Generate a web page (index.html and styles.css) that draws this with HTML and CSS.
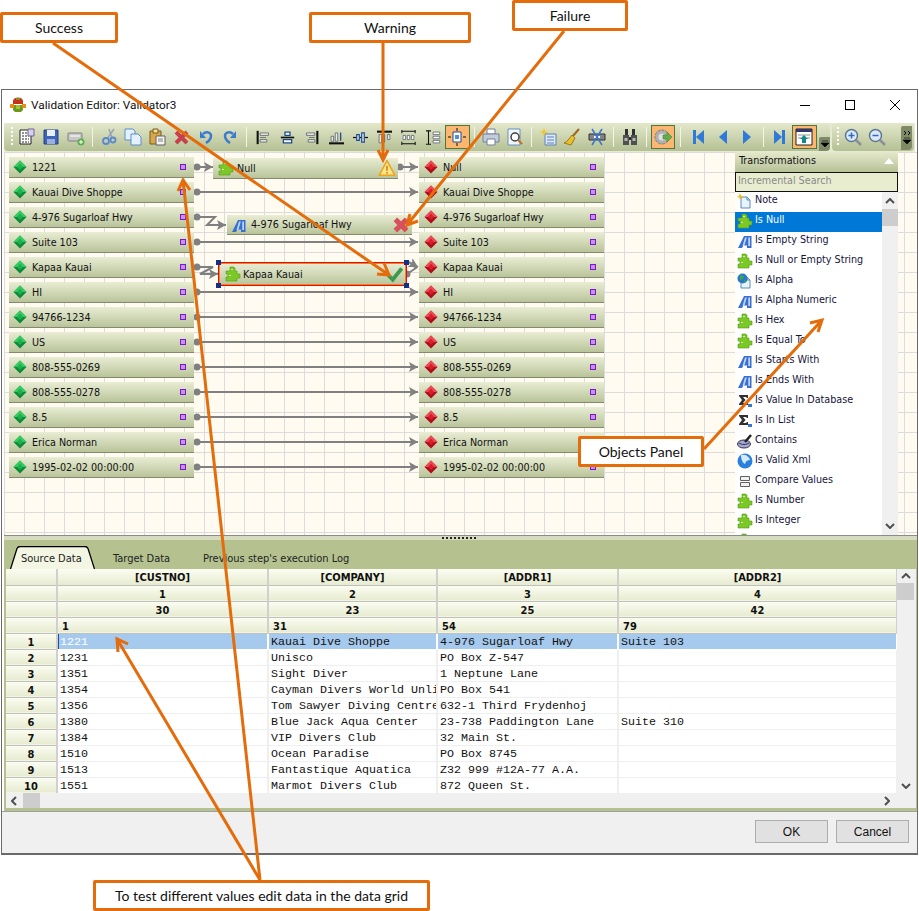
FILE: index.html
```html
<!DOCTYPE html>
<html lang="en">
<head>
    <meta charset="UTF-8">
    <title>Validation Editor: Validator3</title>
    <link rel="stylesheet" href="styles.css">
</head>
<body>
    <svg class="defs" width="0" height="0">
        <defs>
            <symbol id="i-green" viewBox="0 0 16 16">
                <polygon points="8,1.500 14.500,8 8,14.500 1.500,8" fill="#0c8a36"/>
                <polygon points="8,1.500 14.500,8 8,8 1.500,8" fill="#35cc62"/>
                <polygon points="8,4.500 11,8 8,11 5,8" fill="#1cb04e"/>
            </symbol>
            <symbol id="i-red" viewBox="0 0 16 16">
                <polygon points="8,1.500 14.500,8 8,14.500 1.500,8" fill="#ae0e1a"/>
                <polygon points="8,1.500 14.500,8 8,8 1.500,8" fill="#ee4a56"/>
                <polygon points="8,4.500 11,8 8,11 5,8" fill="#d81f2d"/>
            </symbol>
            <symbol id="i-puzzle" viewBox="0 0 16 16">
                <path d="M5 1h4v1h1v3h2v3h3v4h-3v3H1v-4h2V8H1V5h4V2z" fill="#7cc826" stroke="#4f9a16" stroke-width=".6"/>
                <path d="M6 3h2v1H6zM4 9h2v1H4z" fill="#d8f2a8"/>
            </symbol>
            <symbol id="i-a" viewBox="0 0 16 16">
                <path d="M1 15 7 3h7.500v12H10v-2.500H6.500L5 15z" fill="#3a6fd0"/>
                <path d="M8 4.500 5.500 13h1.800l2.500-8.500zM11.300 4.500h1.700V13h-1.700z" fill="#bcd6fa"/>
            </symbol>
            <symbol id="i-doc" viewBox="0 0 16 16">
                <path d="M4 4h6l3 3v8H4z" fill="#e8f3fc" stroke="#5a8cb8"/>
                <path d="M10 4v3h3" fill="none" stroke="#5a8cb8"/>
            </symbol>
            <symbol id="i-sigma" viewBox="0 0 16 16">
                <path d="M2 2h9v3H9.500V4H6l2.500 3L6 10h3.500V9H11v3H2v-1l3-4-3-4z" fill="#303030"/>
                <path d="M11 11h4v3h-4z" fill="#3a78d0"/>
            </symbol>
        </defs>
    </svg>

    <div class="window">
        <div class="titlebar">
            <svg class="app-icon" viewBox="0 0 16 16" width="16" height="16">
                <path d="M3 8h10v5l-2 2H5l-2-2z" fill="#6d9a1c"/>
                <path d="M0 7h4v4H0zM12 7h4v4h-4z" fill="#e0901a"/>
                <path d="M3 4a5 3.500 0 0 1 10 0v3H3z" fill="#c8301c"/>
                <path d="M6 1h4v2H6z" fill="#7a9a20"/>
                <path d="M6 8h4v4H6z" fill="#a8c030"/>
            </svg>
            <span class="title">Validation Editor: Validator3</span>
            <div class="win-btns">
                <svg viewBox="0 0 10 10" width="10" height="10"><path d="M0 5.500h10" stroke="#000"/></svg>
                <svg viewBox="0 0 10 10" width="10" height="10"><rect x=".5" y=".5" width="9" height="9" fill="none" stroke="#000"/></svg>
                <svg viewBox="0 0 10 10" width="10" height="10"><path d="M0 0l10 10M10 0L0 10" stroke="#000"/></svg>
            </div>
        </div>

        <div class="toolstrip">
            <div class="toolbar main">
                <span class="grip"></span>
                <span class="tool"><svg viewBox="0 0 18 18"><path d="M2 2h11v14H2z" fill="#fff" stroke="#222"/><path d="M4 5h7M4 8h7M4 11h7M4 14h7" stroke="#222" stroke-dasharray="2 1"/><path d="M10 1h6v7h-6z" fill="#d8d0e8" stroke="#7060a0"/></svg></span>
                <span class="tool"><svg viewBox="0 0 18 18"><path d="M2 2h14v14H2z" fill="#3f63b8" stroke="#28407e"/><path d="M5 2h8v6H5z" fill="#e8eef8"/><path d="M5 11h8v5H5z" fill="#9ab0dc"/></svg></span>
                <span class="tool"><svg viewBox="0 0 18 18"><rect x="1" y="5" width="14" height="8" rx="1" fill="#c8c8c8" stroke="#808080"/><path d="M3 8h10" stroke="#fff"/><circle cx="14" cy="14" r="3.500" fill="#5ab04a"/><path d="M12 14h4M14 12v4" stroke="#fff"/></svg></span>
                <span class="sep"></span>
                <span class="tool"><svg viewBox="0 0 18 18"><path d="M14 1 7 11M9 1l3 9" stroke="#98a4b4" stroke-width="1.500" fill="none"/><circle cx="6" cy="13" r="3" fill="none" stroke="#5a88d0" stroke-width="1.800"/><circle cx="13" cy="12" r="2.500" fill="none" stroke="#5a88d0" stroke-width="1.800"/></svg></span>
                <span class="tool"><svg viewBox="0 0 18 18"><path d="M1 1h8l2 2v9H1z" fill="#e4f0fc" stroke="#5a90c8"/><path d="M7 6h7l3 3v8H7z" fill="#e4f0fc" stroke="#5a90c8"/></svg></span>
                <span class="tool"><svg viewBox="0 0 18 18"><path d="M2 3h11v13H2z" fill="#d8a848" stroke="#7a5a20"/><path d="M5 1h5v4H5z" fill="#f0e0a0" stroke="#7a5a20"/><path d="M8 8h9v9H8z" fill="#f4f4f4" stroke="#606060"/><path d="M10 11h5M10 13h5" stroke="#808080"/></svg></span>
                <span class="tool"><svg viewBox="0 0 18 18"><path d="M3 4l11 11M14 4 3 15" stroke="#c8404c" stroke-width="4"/></svg></span>
                <span class="tool"><svg viewBox="0 0 18 18"><path d="M6 6c3-3 8-2 8 2 0 3-2 5-5 7" fill="none" stroke="#3a7ad0" stroke-width="2.500"/><path d="M3 3v7h6z" fill="#3a7ad0"/></svg></span>
                <span class="tool"><svg viewBox="0 0 18 18"><path d="M12 6C9 3 4 4 4 8c0 3 2 5 5 7" fill="none" stroke="#3a7ad0" stroke-width="2.500"/><path d="M15 3v7H9z" fill="#3a7ad0"/></svg></span>
                <span class="sep"></span>
                <span class="tool sm"><svg viewBox="0 0 18 18"><path d="M2 1v16" stroke="#111" stroke-width="2.500"/><path d="M5 3.500h10v3H5zM5 11.500h8v3H5z" fill="#e8e8e8" stroke="#606870"/><path d="M5 9h7" stroke="#606870"/></svg></span>
                <span class="tool sm"><svg viewBox="0 0 18 18"><path d="M6 2.500h6v4H6zM4 11.500h10v4H4z" fill="#fff" stroke="#1a4a90" stroke-width="1.500"/><path d="M1 9h16" stroke="#111" stroke-width="2"/></svg></span>
                <span class="tool sm"><svg viewBox="0 0 18 18"><path d="M16 1v16" stroke="#111" stroke-width="2.500"/><path d="M3 3.500h10v3H3zM5 11.500h8v3H5z" fill="#e8e8e8" stroke="#606870"/><path d="M6 9h7" stroke="#606870"/></svg></span>
                <span class="tool sm"><svg viewBox="0 0 18 18"><path d="M0 16h18" stroke="#111" stroke-width="2.500"/><path d="M2.500 7.500h3v6h-3zM7.500 3.500h3v10h-3z" fill="#e8e8e8" stroke="#606870"/><path d="M14 3v10" stroke="#1a4a90" stroke-width="1.500"/></svg></span>
                <span class="tool sm"><svg viewBox="0 0 18 18"><path d="M0 9h18" stroke="#111" stroke-width="1.500"/><path d="M4.500 5.500h3v7h-3zM10.500 3.500h3v11h-3z" fill="#fff" stroke="#1a4a90" stroke-width="1.500"/></svg></span>
                <span class="tool sm"><svg viewBox="0 0 18 18"><path d="M0 2h18" stroke="#111" stroke-width="2.500"/><path d="M2.500 5.500h3v10h-3zM12.500 5.500h3v6h-3z" fill="#e8e8e8" stroke="#606870"/><path d="M9 5v10" stroke="#606870" stroke-width="1.500"/></svg></span>
                <span class="tool sm"><svg viewBox="0 0 18 18"><path d="M1 1.500h16M1 16.500h16M1 0v4M17 0v4M1 14v4M17 14v4" stroke="#111" stroke-width="1.300"/><path d="M2.500 6.500h3v5h-3zM7.500 6.500h3v5h-3zM12.500 6.500h3v5h-3z" fill="#fff" stroke="#606870"/></svg></span>
                <span class="tool sm"><svg viewBox="0 0 18 18"><path d="M3 1v16M0 1h6M0 17h6" stroke="#111" stroke-width="1.300"/><path d="M8.500 2.500h8v3h-8zM8.500 7.500h8v3h-8zM8.500 12.500h8v3h-8z" fill="#fff" stroke="#606870"/></svg></span>
                <span class="tool on"><svg viewBox="0 0 18 18"><path d="M5 4h8v10H5z" fill="#fff" stroke="#1a4a90"/><path d="M9 0v3M9 15v3M0 9h3M15 9h3" stroke="#111"/><path d="M7 7h4v4H7z" fill="#4a90e0"/></svg></span>
                <span class="sep"></span>
                <span class="tool"><svg viewBox="0 0 18 18"><path d="M5 1h8v5H5z" fill="#fff" stroke="#7080a0"/><path d="M1 6h16v8H1z" fill="#c4ccd8" stroke="#7080a0"/><path d="M5 11h8v6H5z" fill="#fff" stroke="#7080a0"/></svg></span>
                <span class="tool"><svg viewBox="0 0 18 18"><path d="M2 1h12v16H2z" fill="#f0f6fc" stroke="#6a90c0"/><circle cx="9" cy="9" r="4" fill="#fff" stroke="#404040" stroke-width="1.500"/><path d="M12 12l4 4" stroke="#c07020" stroke-width="2"/></svg></span>
                <span class="sep"></span>
                <span class="tool"><svg viewBox="0 0 18 18"><path d="M6 6h11v11H6z" fill="#dce8f8" stroke="#5a80b8"/><path d="M8 9h7M8 12h7M8 15h7" stroke="#5a80b8"/><path d="M5 0l1 3 3 1-3 1-1 4-1-4-4-1 4-1z" fill="#f0c820"/></svg></span>
                <span class="tool"><svg viewBox="0 0 18 18"><path d="M16 1 9 9" stroke="#a06a20" stroke-width="2"/><path d="M9 7l3 3-4 7-7-2c3-1 5-4 8-8z" fill="#e8c030" stroke="#a07a10"/></svg></span>
                <span class="tool"><svg viewBox="0 0 18 18"><path d="M1 6h16v6H1z" fill="#808488" stroke="#303030"/><path d="M6 8h6v2H6z" fill="#fff"/><path d="M4 1l10 16M14 1 4 17" stroke="#3a78d0" stroke-width="1.500"/></svg></span>
                <span class="sep"></span>
                <span class="tool"><svg viewBox="0 0 18 18"><path d="M2 7h6v10H2zM10 7h6v10h-6z" fill="#505050"/><path d="M4 1h3v6H4zM11 1h3v6h-3zM8 9h2v3H8z" fill="#303030"/><path d="M3.500 10h3v3h-3zM11.500 10h3v3h-3z" fill="#b8b8b8"/></svg></span>
                <span class="sep"></span>
                <span class="tool on"><svg viewBox="0 0 18 18"><circle cx="8" cy="9" r="7" fill="#b0b0b0" stroke="#808080" stroke-dasharray="3 1"/><circle cx="8" cy="9" r="3.500" fill="#e0e0e0"/><path d="M9 7h4V4l5 5-5 5v-3H9z" fill="#5fb04a" stroke="#3a7a2a" stroke-width=".5"/></svg></span>
                <span class="sep wide"></span>
                <span class="tool"><svg viewBox="0 0 18 18"><path d="M4 2h3v14H4z" fill="#2f7ad8"/><path d="M15 2v14L7 9z" fill="#2f7ad8"/></svg></span>
                <span class="tool"><svg viewBox="0 0 18 18"><path d="M13 2v14L5 9z" fill="#2f7ad8"/></svg></span>
                <span class="tool"><svg viewBox="0 0 18 18"><path d="M5 2v14l8-7z" fill="#2f7ad8"/></svg></span>
                <span class="sep"></span>
                <span class="tool"><svg viewBox="0 0 18 18"><path d="M3 2v14l8-7z" fill="#2f7ad8"/><path d="M11 2h3v14h-3z" fill="#2f7ad8"/></svg></span>
                <span class="tool on"><svg viewBox="0 0 18 18"><path d="M1 1h16v16H1z" fill="#fff" stroke="#222"/><path d="M1 1h16v3H1z" fill="#2a3a70"/><path d="M3 7h12M3 10h3M12 10h3" stroke="#909090"/><path d="M9 7l4 4h-2v4H7v-4H5z" fill="#108a8a"/></svg></span>
                <span class="overflow"><svg viewBox="0 0 8 8" width="8" height="8"><path d="M1 1h6M0 3h8l-4 4z" fill="#000" stroke="#000" stroke-width=".6"/></svg></span>
            </div>
            <div class="toolbar zoom">
                <span class="grip"></span>
                <span class="tool"><svg viewBox="0 0 18 18"><circle cx="7.500" cy="7.500" r="6" fill="#dce8f4" stroke="#5a7898" stroke-width="1.500"/><path d="M4.500 7.500h6M7.500 4.500v6" stroke="#2f6ac8" stroke-width="1.500"/><path d="M12 12l5 5" stroke="#8a9098" stroke-width="2.500"/></svg></span>
                <span class="tool"><svg viewBox="0 0 18 18"><circle cx="7.500" cy="7.500" r="6" fill="#dce8f4" stroke="#5a7898" stroke-width="1.500"/><path d="M4.500 7.500h6" stroke="#2f6ac8" stroke-width="1.500"/><path d="M12 12l5 5" stroke="#8a9098" stroke-width="2.500"/></svg></span>
                <span class="overflow tall"><svg viewBox="0 0 8 18" width="8" height="18"><path d="M1 2l2 2-2 2M5 2l2 2-2 2" fill="none" stroke="#000"/><path d="M1 9h6M0 11h8l-4 4z" fill="#000" stroke="#000" stroke-width=".6"/></svg></span>
            </div>
        </div>

        <div class="canvas">
            <svg class="wires" width="911" height="383" viewBox="4 152 911 383">
                <defs>
                    <marker id="dot" markerUnits="userSpaceOnUse" markerWidth="8" markerHeight="8" refX="4" refY="4"><circle cx="4" cy="4" r="3.500" fill="#808080"/></marker>
                    <marker id="head" markerUnits="userSpaceOnUse" markerWidth="10" markerHeight="10" refX="9" refY="5" orient="auto"><path d="M0 0l9 5-9 5 2-5z" fill="#808080"/></marker>
                </defs>
                <path class="wire" d="M197 167H213"/>
                <path class="wire" d="M400 167H418"/>
                <path class="wire" d="M197 192H418"/>
                <path class="wire" d="M197 217H215L207 225H226"/>
                <path class="wire" d="M197 242H418"/>
                <path class="wire" d="M197 267H213L200 274H218"/>
                <path class="wire" d="M197 292H418"/>
                <path class="wire" d="M197 317H418"/>
                <path class="wire" d="M197 342H418"/>
                <path class="wire" d="M197 367H418"/>
                <path class="wire" d="M197 392H418"/>
                <path class="wire" d="M197 417H418"/>
                <path class="wire" d="M197 442H418"/>
                <path class="wire" d="M197 467H418"/>
                <path class="wire" d="M407 274L416 268L409 262L418 267"/>
            </svg>

            <div class="nodes">
                <div class="node"><svg class="ico"><use href="#i-green"/></svg><span class="label">1221</span><i class="port"></i></div>
                <div class="node"><svg class="ico"><use href="#i-green"/></svg><span class="label">Kauai Dive Shoppe</span><i class="port"></i></div>
                <div class="node"><svg class="ico"><use href="#i-green"/></svg><span class="label">4-976 Sugarloaf Hwy</span><i class="port"></i></div>
                <div class="node"><svg class="ico"><use href="#i-green"/></svg><span class="label">Suite 103</span><i class="port"></i></div>
                <div class="node"><svg class="ico"><use href="#i-green"/></svg><span class="label">Kapaa Kauai</span><i class="port"></i></div>
                <div class="node"><svg class="ico"><use href="#i-green"/></svg><span class="label">HI</span><i class="port"></i></div>
                <div class="node"><svg class="ico"><use href="#i-green"/></svg><span class="label">94766-1234</span><i class="port"></i></div>
                <div class="node"><svg class="ico"><use href="#i-green"/></svg><span class="label">US</span><i class="port"></i></div>
                <div class="node"><svg class="ico"><use href="#i-green"/></svg><span class="label">808-555-0269</span><i class="port"></i></div>
                <div class="node"><svg class="ico"><use href="#i-green"/></svg><span class="label">808-555-0278</span><i class="port"></i></div>
                <div class="node"><svg class="ico"><use href="#i-green"/></svg><span class="label">8.5</span><i class="port"></i></div>
                <div class="node"><svg class="ico"><use href="#i-green"/></svg><span class="label">Erica Norman</span><i class="port"></i></div>
                <div class="node"><svg class="ico"><use href="#i-green"/></svg><span class="label">1995-02-02 00:00:00</span><i class="port"></i></div>
            </div>

            <div class="nodes target">
                <div class="node"><svg class="ico"><use href="#i-red"/></svg><span class="label">Null</span><i class="port"></i></div>
                <div class="node"><svg class="ico"><use href="#i-red"/></svg><span class="label">Kauai Dive Shoppe</span><i class="port"></i></div>
                <div class="node"><svg class="ico"><use href="#i-red"/></svg><span class="label">4-976 Sugarloaf Hwy</span><i class="port"></i></div>
                <div class="node"><svg class="ico"><use href="#i-red"/></svg><span class="label">Suite 103</span><i class="port"></i></div>
                <div class="node"><svg class="ico"><use href="#i-red"/></svg><span class="label">Kapaa Kauai</span><i class="port"></i></div>
                <div class="node"><svg class="ico"><use href="#i-red"/></svg><span class="label">HI</span><i class="port"></i></div>
                <div class="node"><svg class="ico"><use href="#i-red"/></svg><span class="label">94766-1234</span><i class="port"></i></div>
                <div class="node"><svg class="ico"><use href="#i-red"/></svg><span class="label">US</span><i class="port"></i></div>
                <div class="node"><svg class="ico"><use href="#i-red"/></svg><span class="label">808-555-0269</span><i class="port"></i></div>
                <div class="node"><svg class="ico"><use href="#i-red"/></svg><span class="label">808-555-0278</span><i class="port"></i></div>
                <div class="node"><svg class="ico"><use href="#i-red"/></svg><span class="label">8.5</span><i class="port"></i></div>
                <div class="node"><svg class="ico"><use href="#i-red"/></svg><span class="label">Erica Norman</span><i class="port"></i></div>
                <div class="node"><svg class="ico"><use href="#i-red"/></svg><span class="label">1995-02-02 00:00:00</span><i class="port"></i></div>
            </div>

            <!-- transforms sit on the free canvas -->
            <div class="node step step-null">
                <svg class="ico"><use href="#i-puzzle"/></svg><span class="label">Null</span>
                <svg class="status" viewBox="0 0 16 16"><path d="M8 1.500 15 14.500H1z" fill="#fbe58a" stroke="#eda41e" stroke-width="1.400" stroke-linejoin="round"/><path d="M7.300 6h1.400v4.500H7.300zM7.300 11.500h1.400V13H7.300z" fill="#c88a10"/></svg>
            </div>
            <div class="node step step-addr">
                <svg class="ico"><use href="#i-a"/></svg><span class="label">4-976 Sugarloaf Hwy</span>
                <svg class="status" viewBox="0 0 16 16"><path d="M3 3l10 10M13 3 3 13" stroke="#d8505c" stroke-width="4.500"/></svg>
            </div>
            <div class="node step step-city">
                <svg class="ico"><use href="#i-puzzle"/></svg><span class="label">Kapaa Kauai</span>
                <svg class="status" viewBox="0 0 16 16"><path d="M2 9l4 4 8-10" fill="none" stroke="#3a9a50" stroke-width="3.500"/></svg>
                <i class="handle tl"></i><i class="handle tr"></i><i class="handle bl"></i><i class="handle br"></i>
            </div>

            <div class="objects">
                <div class="objects-head"><span>Transformations</span><svg viewBox="0 0 10 6" width="10" height="6"><path d="M0 6 5 0l5 6z" fill="#fff"/></svg></div>
                <div class="search">Incremental Search</div>
                <div class="objects-body">
                    <ul class="objects-list">
                        <li><svg class="ico" viewBox="0 0 16 16"><use href="#i-doc"/><path d="M3 0l1 2.500L7 3.500 4 4.500 3 7 2 4.500 0 3.500l2-1z" fill="#f0c020"/></svg>Note</li>
                        <li class="sel"><svg class="ico"><use href="#i-puzzle"/></svg>Is Null</li>
                        <li><svg class="ico"><use href="#i-a"/></svg>Is Empty String</li>
                        <li><svg class="ico"><use href="#i-puzzle"/></svg>Is Null or Empty String</li>
                        <li><svg class="ico" viewBox="0 0 16 16"><use href="#i-doc"/><circle cx="5.500" cy="5.500" r="5" fill="#2a78c8"/><path d="M3 2l4 1-1 3-3 1zM7 7l3 1-2 2z" fill="#3aa848"/></svg>Is Alpha</li>
                        <li><svg class="ico"><use href="#i-a"/></svg>Is Alpha Numeric</li>
                        <li><svg class="ico"><use href="#i-puzzle"/></svg>Is Hex</li>
                        <li><svg class="ico"><use href="#i-puzzle"/></svg>Is Equal To</li>
                        <li><svg class="ico"><use href="#i-a"/></svg>Is Starts With</li>
                        <li><svg class="ico"><use href="#i-a"/></svg>Is Ends With</li>
                        <li><svg class="ico"><use href="#i-sigma"/></svg>Is Value In Database</li>
                        <li><svg class="ico"><use href="#i-sigma"/></svg>Is In List</li>
                        <li><svg class="ico" viewBox="0 0 16 16"><ellipse cx="7" cy="11" rx="6.500" ry="4" fill="#a8a8d8" stroke="#303040"/><path d="M2 10c3 2 7 2 10 0" fill="none" stroke="#303040"/><path d="M8 9 14 2" stroke="#222" stroke-width="2.500"/></svg>Contains</li>
                        <li><svg class="ico" viewBox="0 0 16 16"><circle cx="8" cy="8" r="7.500" fill="#2a80e0"/><path d="M4 2c4-1 8 1 9 5-3 0-4 1-5 4-2-1-4-4-4-9z" fill="#d8e8fb"/></svg>Is Valid Xml</li>
                        <li><svg class="ico" viewBox="0 0 16 16"><path d="M3.500 3.500h9v4h-9zM3.500 9.500h9v4h-9z" fill="#f0f0f0" stroke="#606060"/></svg>Compare Values</li>
                        <li><svg class="ico"><use href="#i-puzzle"/></svg>Is Number</li>
                        <li><svg class="ico"><use href="#i-puzzle"/></svg>Is Integer</li>
                        <li><svg class="ico"><use href="#i-puzzle"/></svg></li>
                    </ul>
                    <div class="vscroll">
                        <svg viewBox="0 0 10 6" width="10" height="6"><path d="M1 5l4-4 4 4" fill="none" stroke="#505050" stroke-width="2"/></svg>
                        <span class="thumb"></span>
                        <svg class="end" viewBox="0 0 10 6" width="10" height="6"><path d="M1 1l4 4 4-4" fill="none" stroke="#505050" stroke-width="2"/></svg>
                    </div>
                </div>
            </div>
        </div>

        <div class="lower">
            <div class="splitter"><span class="split-grip"></span></div>
            <div class="tabs">
                <div class="tab active">
                    <svg viewBox="0 0 85 23" width="85" height="23"><path d="M.5 23 7 2.500Q8 .5 10 .5H75Q77 .5 78 2.500L84.500 23" fill="#f4f6e4" stroke="#000" stroke-width="1.300"/></svg>
                    <span>Source Data</span>
                </div>
                <div class="tab second">Target Data</div>
                <div class="tab third">Previous step's execution Log</div>
            </div>
            <div class="data-wrap">
                <div class="data-top">
                    <div class="table-clip">
                        <table class="data">
                            <colgroup><col class="c0"><col class="c1"><col class="c2"><col class="c3"><col class="c4"></colgroup>
                            <thead>
                                <tr><th></th><th>[CUSTNO]</th><th>[COMPANY]</th><th>[ADDR1]</th><th>[ADDR2]</th></tr>
                                <tr><th></th><th>1</th><th>2</th><th>3</th><th>4</th></tr>
                                <tr><th></th><th>30</th><th>23</th><th>25</th><th>42</th></tr>
                                <tr class="offsets"><th></th><th>1</th><th>31</th><th>54</th><th>79</th></tr>
                            </thead>
                            <tbody>
                                <tr class="current"><th>1</th><td class="editing">1221</td><td>Kauai Dive Shoppe</td><td>4-976 Sugarloaf Hwy</td><td>Suite 103</td></tr>
                                <tr><th>2</th><td>1231</td><td>Unisco</td><td>PO Box Z-547</td><td></td></tr>
                                <tr><th>3</th><td>1351</td><td>Sight Diver</td><td>1 Neptune Lane</td><td></td></tr>
                                <tr><th>4</th><td>1354</td><td>Cayman Divers World Unli</td><td>PO Box 541</td><td></td></tr>
                                <tr><th>5</th><td>1356</td><td>Tom Sawyer Diving Centre</td><td>632-1 Third Frydenhoj</td><td></td></tr>
                                <tr><th>6</th><td>1380</td><td>Blue Jack Aqua Center</td><td>23-738 Paddington Lane</td><td>Suite 310</td></tr>
                                <tr><th>7</th><td>1384</td><td>VIP Divers Club</td><td>32 Main St.</td><td></td></tr>
                                <tr><th>8</th><td>1510</td><td>Ocean Paradise</td><td>PO Box 8745</td><td></td></tr>
                                <tr><th>9</th><td>1513</td><td>Fantastique Aquatica</td><td>Z32 999 #12A-77 A.A.</td><td></td></tr>
                                <tr><th>10</th><td>1551</td><td>Marmot Divers Club</td><td>872 Queen St.</td><td></td></tr>
                            </tbody>
                        </table>
                    </div>
                    <div class="vscroll grid-v">
                        <svg viewBox="0 0 10 6" width="10" height="6"><path d="M1 5l4-4 4 4" fill="none" stroke="#505050" stroke-width="2"/></svg>
                        <span class="thumb"></span>
                        <svg class="end" viewBox="0 0 10 6" width="10" height="6"><path d="M1 1l4 4 4-4" fill="none" stroke="#505050" stroke-width="2"/></svg>
                    </div>
                </div>
                <div class="hscroll">
                    <svg viewBox="0 0 6 10" width="6" height="10"><path d="M5 1 1 5l4 4" fill="none" stroke="#505050" stroke-width="2"/></svg>
                    <span class="thumb"></span>
                    <svg class="end" viewBox="0 0 6 10" width="6" height="10"><path d="M1 1l4 4-4 4" fill="none" stroke="#505050" stroke-width="2"/></svg>
                </div>
            </div>
        </div>

        <div class="footer">
            <button class="btn">OK</button>
            <button class="btn">Cancel</button>
        </div>
    </div>

    <!-- annotations on top of the screenshot -->
    <svg class="arrows" width="919" height="911" viewBox="0 0 919 911">
        <path d="M53 43 389 275M377 274 389 275 384 263"/>
        <path d="M383 43V160M378 150 383 160 388 150"/>
        <path d="M564 31 407 225M410 214 407 225 418 221"/>
        <path d="M704 449 822 320M810 323 822 320 818 332"/>
        <path d="M260 880 117 639M118 652 117 639 128 644"/>
        <path d="M260 880 183 180M178 191 183 180 190 190"/>
    </svg>
    <div class="callout c-success">Success</div>
    <div class="callout c-warning">Warning</div>
    <div class="callout c-failure">Failure</div>
    <div class="callout c-objects">Objects Panel</div>
    <div class="callout c-grid">To test different values edit data in the data grid</div>
</body>
</html>
```

FILE: styles.css
```css
* {
    box-sizing: border-box;
}
body {
    margin: 0;
    height: 911px;
    position: relative;
    overflow: hidden;
    background: white;
    font-family: "DejaVu Sans", sans-serif;
    font-stretch: condensed;
    font-size: 10.7px;
    color: #111;
}
.defs {
    position: absolute;
}

/* window */
.window {
    width: 917px;
    height: 766px;
    margin: 89px 0 0 1px;
    border: 1px solid #6a6a6a;
    border-bottom-width: 2px;
    background: white;
    display: flex;
    flex-direction: column;
}
.titlebar {
    height: 33px;
    flex: none;
    display: flex;
    align-items: center;
    padding: 0 0 3px 8px;
}
.title {
    margin-left: 5px;
    font-family: Roboto, sans-serif;
    font-stretch: normal;
    font-size: 11.8px;
}
.win-btns {
    margin-left: auto;
    display: flex;
    gap: 35px;
    padding-right: 17px;
}

/* toolbars */
.toolstrip {
    height: 29px;
    flex: none;
    margin: 0 2px;
    display: flex;
    gap: 2px;
    background: #e6ead3;
    padding-bottom: 1px;
}
.toolbar {
    display: flex;
    align-items: center;
    height: 28px;
    border-radius: 4px;
    background: linear-gradient(#e3e8cb, #b5c094);
    position: relative;
}
.toolbar.main {
    width: 826px;
    padding-left: 7px;
}
.toolbar.zoom {
    width: 82px;
    padding-left: 5px;
}
.grip {
    width: 2px;
    height: 20px;
    margin-right: 2px;
    background: repeating-linear-gradient(#fff 0 2px, transparent 2px 4px);
}
.tool {
    width: 24.25px;
    height: 24px;
    flex: none;
    display: flex;
    align-items: center;
    justify-content: center;
}
.tool svg {
    width: 18px;
    height: 18px;
}
.tool.sm svg {
    width: 15px;
    height: 15px;
}
.tool.on {
    background: #fbb66f;
    box-shadow: inset 0 0 0 1px #53763f;
}
.sep {
    width: 9px;
    height: 20px;
    flex: none;
    background: linear-gradient(#f2f4e6, #f2f4e6) center / 1px 100% no-repeat;
}
.sep.wide {
    width: 11px;
}
.overflow {
    position: absolute;
    right: 0;
    top: 14px;
    width: 11px;
    height: 14px;
    background: #7f8a66;
    border-radius: 2px 0 4px 0;
    display: flex;
    align-items: center;
    justify-content: center;
}
.overflow.tall {
    top: 3px;
    height: 24px;
    right: 2px;
}

/* diagram */
.canvas {
    height: 383px;
    flex: none;
    margin: 0 0 0 2px;
    position: relative;
    display: flex;
    padding: 5px 0 0 5px;
    background-color: #fffbf0;
    background-image:
        linear-gradient(#dcdcdc 1px, transparent 1px),
        linear-gradient(90deg, #dcdcdc 1px, transparent 1px);
    background-size: 20px 20px;
}
.wires {
    position: absolute;
    left: 0;
    top: 0;
}
.wire {
    fill: none;
    stroke: #808080;
    stroke-width: 2;
    marker-start: url(#dot);
    marker-end: url(#head);
}
.nodes {
    width: 185px;
    display: flex;
    flex-direction: column;
    gap: 4px;
    position: relative;
}
.nodes.target {
    margin-left: 225px;
}
.nodes.target .node {
    padding-left: 4px;
}
.node {
    width: 185px;
    height: 21px;
    display: flex;
    align-items: center;
    padding-left: 3px;
    background: linear-gradient(#e9edd4, #b9c49a);
    border-bottom: 1px solid #85896f;
    white-space: nowrap;
    position: relative;
}
.ico {
    width: 16px;
    height: 16px;
    flex: none;
}
.label {
    margin-left: 4px;
    line-height: 15px;
}
.port {
    position: absolute;
    right: 8px;
    top: 7px;
    width: 6px;
    height: 6px;
    background: #c892ea;
    border: 1px solid #7c14d8;
}
.step {
    position: absolute;
    z-index: 1;
}
.step-null {
    left: 209px;
    top: 6px;
    padding-left: 5px;
}
.step-null .label {
    margin-left: 3px;
}
.step-addr {
    left: 223px;
    top: 63px;
    width: 185px;
    height: 20px;
    padding-left: 4px;
}
.step-city {
    left: 214px;
    top: 110px;
    width: 189px;
    height: 24px;
    padding-left: 6px;
    border: 1px solid #e01010;
    box-shadow: inset 0 0 0 1px #f08020;
}
.step-city .label {
    margin-left: 2px;
}
.status {
    width: 18px;
    height: 18px;
    margin-left: auto;
    margin-right: 2px;
}
.handle {
    position: absolute;
    width: 5px;
    height: 5px;
    background: #12308a;
}
.tl { left: -3px; top: -3px; }
.tr { right: -3px; top: -3px; }
.bl { left: -3px; bottom: -3px; }
.br { right: -3px; bottom: -3px; }

/* objects panel */
.objects {
    width: 163px;
    margin: -5px 0 0 131px;
    display: flex;
    flex-direction: column;
    position: relative;
}
.objects-head {
    height: 20px;
    flex: none;
    display: flex;
    align-items: center;
    justify-content: space-between;
    padding: 0 4px 3px;
    background: linear-gradient(#e5e9cd, #b6c196);
}
.search {
    height: 20px;
    flex: none;
    padding: 0 2px;
    line-height: 15px;
    border: 1px solid #111;
    background: #e8edd0;
    color: #8a8a8a;
}
.objects-body {
    flex: 1;
    min-height: 0;
    display: flex;
    background: white;
}
.objects-list {
    list-style: none;
    margin: 0;
    padding: 0;
    flex: 1;
    overflow: hidden;
}
.objects-list li {
    height: 20px;
    display: flex;
    gap: 2px;
    padding: 0 0 0 2px;
    line-height: 15px;
    color: #14143c;
}
.objects-list li .ico {
    margin-top: 1px;
}
.objects-list .sel {
    background: #0078d7;
    color: white;
}
.vscroll {
    width: 16px;
    flex: none;
    background: #f0f0f0;
    display: flex;
    flex-direction: column;
    align-items: center;
    padding: 6px 0;
}
.vscroll .thumb {
    width: 100%;
    height: 17px;
    margin-top: 5px;
    background: #cdcdcd;
}
.vscroll .end {
    margin-top: auto;
}

/* lower pane */
.lower {
    margin: 0 0 0 2px;
    flex: 1;
    min-height: 0;
    background: #b5c290;
    display: flex;
    flex-direction: column;
}
.splitter {
    height: 5px;
    flex: none;
    border-top: 1px solid #8c8c8c;
    background: #d5dcc0;
    display: flex;
    justify-content: center;
    padding-right: 4px;
}
.split-grip {
    width: 34px;
    height: 2px;
    margin-top: 1px;
    background: repeating-linear-gradient(90deg, #222 0 2px, transparent 2px 4px);
}
.tabs {
    height: 29px;
    flex: none;
    position: relative;
}
.tab {
    position: absolute;
    top: 12px;
    font-size: 11px;
    color: #222;
}
.tab.active {
    left: 6px;
    top: 6px;
    width: 85px;
    height: 23px;
}
.tab.active svg {
    position: absolute;
    left: 0;
    top: 0;
}
.tab.active span {
    position: absolute;
    left: 11px;
    top: 6px;
    white-space: nowrap;
}
.tab.second {
    left: 109px;
}
.tab.third {
    left: 199px;
}
.data-wrap {
    margin: 0 1px 0 2px;
    height: 241px;
    flex: none;
    display: flex;
    flex-direction: column;
    background: #f0f0f0;
    border-bottom: 2px solid #b5c290;
}
.data-top {
    height: 224px;
    flex: none;
    display: flex;
}
.table-clip {
    width: 891px;
    overflow: hidden;
    background: white;
}
.data {
    width: 891px;
    border-collapse: collapse;
    table-layout: fixed;
}
.c0 { width: 51px; }
.c1 { width: 211px; }
.c2 { width: 169px; }
.c3 { width: 181px; }
.c4 { width: 279px; }
.data th,
.data td {
    height: 16px;
    padding: 1px 2px 0;
    overflow: hidden;
    white-space: nowrap;
    line-height: 14px;
}
.data th {
    padding-top: 2px;
    line-height: 13px;
    font-size: 11px;
    font-weight: bold;
    text-align: center;
    color: #111;
    background: linear-gradient(#fcfdf2, #e6ebcf);
    border-right: 2px solid #d0d0d0;
    border-bottom: 1px solid #c0c0c0;
}
.data .offsets th {
    text-align: left;
    padding-left: 4px;
}
.data td {
    font-family: "Liberation Mono", monospace;
    font-stretch: normal;
    font-size: 11.67px;
    color: #111;
    border-right: 2px solid #efefef;
    border-bottom: 1px solid #efefef;
}
.current td {
    background: #a6c9ee;
    border-right-color: white;
    border-bottom-color: white;
}
.current .editing {
    color: white;
    box-shadow: inset 1px 0 0 #1c4f9a;
}
.grid-v {
    width: 17px;
    padding: 4px 0;
}
.grid-v .thumb {
    margin-top: 4px;
}
.hscroll {
    height: 15px;
    flex: none;
    display: flex;
    align-items: center;
    padding: 0 26px 0 5px;
}
.hscroll .thumb {
    width: 17px;
    height: 15px;
    margin-left: 6px;
    background: #cdcdcd;
}
.hscroll .end {
    margin-left: auto;
}

.footer {
    height: 42px;
    flex: none;
    background: #f0f0f0;
    border-top: 1px solid #a0a0a0;
    display: flex;
    justify-content: flex-end;
    align-items: flex-start;
    gap: 8px;
    padding: 8px 8px 0 0;
}
.btn {
    width: 73px;
    height: 23px;
    padding: 0;
    background: #e1e1e1;
    border: 1px solid #adadad;
    font-family: "Liberation Sans", sans-serif;
    font-stretch: normal;
    font-size: 12px;
    color: #111;
}

/* annotations */
.arrows {
    position: absolute;
    left: 0;
    top: 0;
    z-index: 5;
    fill: none;
    stroke: #e46c0a;
    stroke-width: 3;
}
.callout {
    position: absolute;
    z-index: 6;
    height: 31px;
    display: flex;
    align-items: center;
    justify-content: center;
    padding-bottom: 1px;
    background: white;
    border: 3px solid #e46c0a;
    border-radius: 2px;
    font-family: Lato, sans-serif;
    font-stretch: normal;
    font-size: 14px;
    color: #111;
}
.c-success { left: 0; top: 12px; width: 118px; }
.c-warning { left: 309px; top: 12px; width: 162px; }
.c-failure { left: 512px; top: 0; width: 116px; }
.c-objects { left: 578px; top: 436px; width: 126px; }
.c-grid { left: 93px; top: 880px; width: 337px; }
```
